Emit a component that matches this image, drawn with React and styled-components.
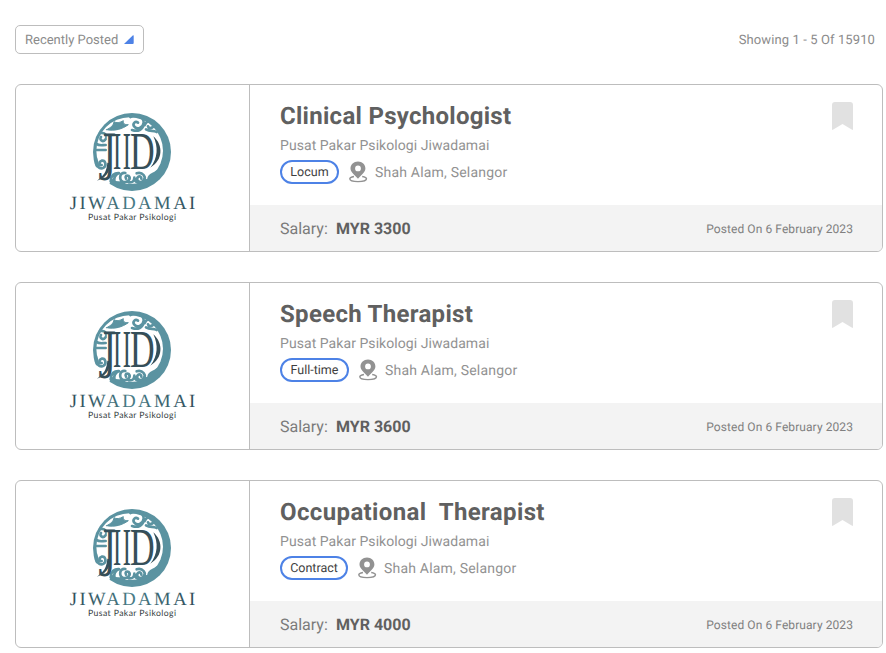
import React from "react";
import styled, { createGlobalStyle } from "styled-components";

const GlobalStyle = createGlobalStyle`
  * { box-sizing: border-box; }
  body {
    margin: 0;
    background: #fff;
    color: #8b8b8b;
    font-family: Roboto, sans-serif;
    text-rendering: geometricPrecision;
  }
`;

const Page = styled.main`
  width: 886px;
  height: 653px;
  padding: 25px 3px 0 15px;
  overflow: hidden;
`;

const Toolbar = styled.header`
  display: flex;
  align-items: center;
  justify-content: space-between;
  height: 29px;
  margin-bottom: 30px;
  padding-right: 8px;
`;

const SortButton = styled.button`
  display: flex;
  align-items: center;
  justify-content: space-between;
  width: 129px;
  height: 29px;
  padding: 0 9px;
  border: 1px solid #bdbdbd;
  border-radius: 5px;
  background: #fff;
  color: #8b8b8b;
  font: 400 13px/16px Roboto, sans-serif;
  letter-spacing: 0;
  text-rendering: geometricPrecision;
  white-space: nowrap;
`;

const SortLabel = styled.span`
  padding-top: 2px;
`;

const ResultCount = styled.span`
  padding-top: 2px;
  font-size: 13px;
  line-height: 16px;
  letter-spacing: 0.1px;
`;

const JobList = styled.div`
  display: flex;
  flex-direction: column;
  gap: 30px;
`;

const Card = styled.article`
  display: grid;
  grid-template-columns: 234px 1fr;
  height: 168px;
  border: 1px solid #bdbdbd;
  border-radius: 6px;
  overflow: hidden;
`;

const LogoPane = styled.div`
  padding: 27px 0 0 52px;
  border-right: 1px solid #bdbdbd;
`;

const Details = styled.div`
  display: flex;
  flex-direction: column;
`;

const Summary = styled.div`
  display: flex;
  justify-content: space-between;
  height: 120px;
  padding: 17px 29px 0 30px;
`;

const Title = styled.h2`
  margin: 0;
  color: #606060;
  font-size: 24px;
  font-weight: 700;
  line-height: 29px;
  letter-spacing: ${({ $spacing }) => $spacing}px;
  white-space: pre;
`;

const Company = styled.p`
  margin: 6px 0 5px;
  color: #929292;
  font-size: 14px;
  line-height: 18px;
  letter-spacing: 0.06px;
`;

const MetaRow = styled.div`
  display: flex;
  align-items: center;
  height: 24px;
`;

const JobType = styled.span`
  width: ${({ $width }) => $width}px;
  height: 24px;
  padding-top: 1px;
  border: 2px solid #4d82e6;
  border-radius: 12px;
  color: #3e3e3e;
  font-size: 12.5px;
  line-height: 19px;
  text-align: center;
`;

const Location = styled.span`
  display: flex;
  align-items: center;
  gap: 7px;
  margin-left: 10px;
  color: #929292;
  font-size: 14px;
  line-height: 20px;
  letter-spacing: 0.2px;
`;

const Place = styled.span`
  padding-top: 2px;
`;

const Footer = styled.footer`
  display: flex;
  align-items: center;
  justify-content: space-between;
  height: 46px;
  padding: 0 29px 0 30px;
  background: #f3f3f3;
`;

const Salary = styled.span`
  display: flex;
  color: #7b7b7b;
  font-size: 16px;
`;

const SalaryLabel = styled.span`
  width: 56px;
`;

const Amount = styled.strong`
  color: #606060;
  font-weight: 700;
`;

const PostedDate = styled.time`
  padding-top: 1px;
  color: #808080;
  font-size: 12px;
  line-height: 14px;
  letter-spacing: 0.08px;
`;

const Drawing = styled.svg`
  display: block;
  flex: none;
`;

function SortArrow() {
  return (
    <Drawing width="10" height="9" viewBox="0 0 10 9">
      <path d="M0 9 8.7.4Q9.7 0 9.7.8V8Q9.7 9 8.7 9Z" fill="#4d82e6" />
    </Drawing>
  );
}

function Bookmark() {
  return (
    <Drawing width="21" height="28" viewBox="0 0 21 28">
      <path d="M3 0H18Q21 0 21 3V27Q21 28.5 19.7 27.5L10.5 22 1.3 27.5Q0 28.5 0 27V3Q0 0 3 0Z" fill="#e1e1e1" />
    </Drawing>
  );
}

function LocationPin() {
  return (
    <Drawing width="19" height="22" viewBox="0 0 19 22">
      <path d="M5 15.5C2.2 16.1.8 16.8.8 17.8.8 19.5 4.5 20.6 9 20.6s8.5-1.2 8.5-2.8c0-1-1.5-1.8-4.3-2.3" fill="none" stroke="#929292" strokeWidth="1.4" />
      <path fillRule="evenodd" d="M9 .4C4.7.4 1.5 3.5 1.5 7.4c0 4 4.6 6.8 7.5 10.3 2.8-3.5 7.4-6.3 7.4-10.3C16.4 3.5 13.3.4 9 .4Zm0 4.1a2.9 2.9 0 1 0 0 5.8 2.9 2.9 0 0 0 0-5.8Z" fill="#929292" />
    </Drawing>
  );
}

function JiwadamaiLogo() {
  return (
    <Drawing width="130" height="112" viewBox="-51 21 390 336">
      <defs>
        <linearGradient id="wordmark">
          <stop offset="0" stopColor="#304e5b" />
          <stop offset=".5" stopColor="#477b86" />
          <stop offset="1" stopColor="#304e5b" />
        </linearGradient>
      </defs>
      <circle cx="141" cy="141" r="117" fill="#5b93a1" />
      <circle cx="134" cy="137" r="100" fill="#fff" />
      <path d="M29 188 60 180 91 199 73 237 47 231Z" fill="#fff" />
      <g fill="none" stroke="#5b93a1" strokeWidth="8" strokeLinecap="round" strokeLinejoin="round">
        <path d="M65 74C90 79 112 72 130 59C118 60 114 55 115 47C105 53 94 55 87 50C86 61 77 68 65 74Z" fill="#5b93a1" strokeWidth="3" />
        <path d="M136 36c19-9 41-1 40 17-1 16-21 23-29 11-5-9 4-17 12-11M141 75c18 6 32 0 35-17M179 60c6-16 27-14 27 0 0 10-15 12-17 4M183 73c13 8 21 1 32 8" />
        <path d="M45 84c17-3 25 11 16 20-8 9-19 0-13-8M33 116c11 8 18 4 29 4M31 135h31M33 163c-4 17 11 33 23 25 10-7 5-23-6-21-9 3-8 15 0 13" />
        <path d="M77 229C78 211 88 203 102 204C90 209 86 220 88 232M88 232c12 2 21-1 29 3M121 204c-18-4-20 21-7 26 14 5 25-9 17-17-7-4-12 3-8 8M131 232c12 2 17-5 17-14 0 11 8 16 18 14M155 205c18-5 31 11 20 22-11 10-23-2-17-10 4-6 12-2 11 4M178 229c4 0 8-2 13-5M191 222c0-14 15-13 24-22" />
      </g>
      <path d="M65 82h128c40 12 40 101 0 116H68Z" fill="#fff" />
      <g fill="#354f59">
        <text transform="translate(52 195) scale(.72 1)" fontFamily="DejaVu Serif, serif" fontSize="150">J</text>
        <path d="M76 175C75 203 61 220 36 227C57 211 65 200 67 173Z" />
        <g fontFamily="Liberation Serif, serif">
          <text transform="translate(84 191) scale(.46 1)" fontSize="160">I</text>
          <text transform="translate(113 191) scale(.46 1)" fontSize="160">I</text>
          <text transform="translate(135 191) scale(.64 1)" fontSize="160">D</text>
          <path d="M205 94c31 27 29 72-9 94 23-29 24-63 9-94Z" />
          <text x="-46" y="312" fontSize="56" textLength="377" fill="url(#wordmark)">JIWADAMAI</text>
        </g>
      </g>
      <text x="9" y="344" fontFamily="Lato, sans-serif" fontSize="26" fill="#343d41" textLength="264">Pusat Pakar Psikologi</text>
    </Drawing>
  );
}

const jobs = [
  { title: "Clinical Psychologist", spacing: 0.28, type: "Locum", width: 59, salary: 3300 },
  { title: "Speech Therapist", spacing: 0.3, type: "Full-time", width: 69, salary: 3600 },
  { title: "Occupational  Therapist", spacing: 0.38, type: "Contract", width: 68, salary: 4000 },
];

function JobCard({ job }) {
  return (
    <Card>
      <LogoPane><JiwadamaiLogo /></LogoPane>
      <Details>
        <Summary>
          <div>
            <Title $spacing={job.spacing}>{job.title}</Title>
            <Company>Pusat Pakar Psikologi Jiwadamai</Company>
            <MetaRow>
              <JobType $width={job.width}>{job.type}</JobType>
              <Location><LocationPin /><Place>Shah Alam, Selangor</Place></Location>
            </MetaRow>
          </div>
          <Bookmark />
        </Summary>
        <Footer>
          <Salary><SalaryLabel>Salary:</SalaryLabel><Amount>MYR {job.salary}</Amount></Salary>
          <PostedDate>Posted On 6 February 2023</PostedDate>
        </Footer>
      </Details>
    </Card>
  );
}

export default function App() {
  return (
    <>
      <GlobalStyle />
      <Page>
        <Toolbar>
          <SortButton><SortLabel>Recently Posted</SortLabel><SortArrow /></SortButton>
          <ResultCount>Showing 1 - 5 Of 15910</ResultCount>
        </Toolbar>
        <JobList>{jobs.map((job) => <JobCard key={job.title} job={job} />)}</JobList>
      </Page>
    </>
  );
}
